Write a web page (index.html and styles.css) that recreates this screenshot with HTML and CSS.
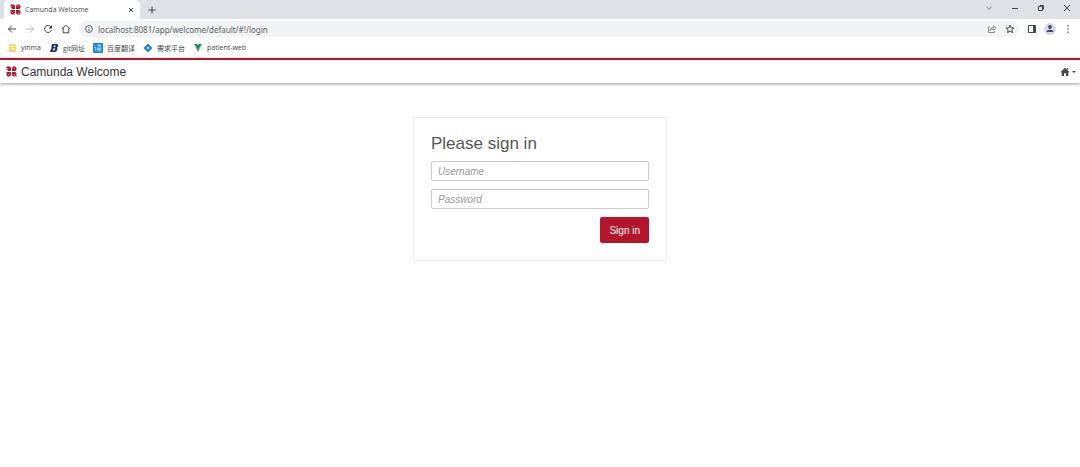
FILE: index.html
```html
<!DOCTYPE html>
<html lang="en">
<head>
    <meta charset="UTF-8">
    <meta name="viewport" content="width=device-width, initial-scale=1.0">
    <title>Camunda Welcome</title>
    <link rel="stylesheet" href="styles.css">
</head>
<body>
    <svg class="defs" width="0" height="0" aria-hidden="true">
        <symbol id="camunda" viewBox="0 0 20 20">
            <path fill="#b5152b" d="M1 1h6l2 2v6H4L1 6zM13 1h4l2 2v4l-2 2h-6V3zM1 11h8v6l-2 2H3l-2-2zM11 11h6l2 2v6h-6l-2-2z"/>
            <path stroke="#fff" stroke-width="1.2" fill="none" d="M1 5h3M14 5l2-2M4 16l2-2M16 15v4"/>
        </symbol>
    </svg>
    <div class="tabs">
        <div class="tab">
            <svg class="logo"><use href="#camunda"/></svg>
            <span class="tab-title">Camunda Welcome</span>
            <button class="icon-btn" aria-label="Close tab"><svg width="6" height="6" viewBox="0 0 6 6"><path d="M1 1l4 4M5 1L1 5"/></svg></button>
        </div>
        <button class="icon-btn new-tab" aria-label="New tab"><svg width="8" height="8" viewBox="0 0 8 8"><path d="M4 .5v7M.5 4h7"/></svg></button>
        <div class="window-buttons">
            <button class="icon-btn soft" aria-label="Search tabs"><svg width="8" height="8" viewBox="0 0 8 8"><path d="M1.500 2.500L4 5.500l2.500-3"/></svg></button>
            <button class="icon-btn" aria-label="Minimize"><svg width="8" height="8" viewBox="0 0 8 8"><path d="M1 4.500h6"/></svg></button>
            <button class="icon-btn" aria-label="Restore"><svg width="8" height="8" viewBox="0 0 8 8"><path d="M1.500 2.500h4v4h-4zM3 2.500V1.500h3.500v3.500h-1"/></svg></button>
            <button class="icon-btn" aria-label="Close"><svg width="8" height="8" viewBox="0 0 8 8"><path d="M1 1l6 6M7 1L1 7"/></svg></button>
        </div>
    </div>
    <div class="toolbar">
        <button class="icon-btn" aria-label="Back"><svg width="10" height="10" viewBox="0 0 10 10"><path d="M9 5H1.500M5 1.500L1.500 5 5 8.500"/></svg></button>
        <button class="icon-btn off" aria-label="Forward"><svg width="10" height="10" viewBox="0 0 10 10"><path d="M1 5h7.500M5 1.500L8.500 5 5 8.500"/></svg></button>
        <button class="icon-btn" aria-label="Reload"><svg width="10" height="10" viewBox="0 0 10 10"><path d="M8 3a3.500 3.500 0 1 0 .5 2.800"/><path class="solid" d="M9 1v3.500H5.500z"/></svg></button>
        <button class="icon-btn" aria-label="Home"><svg width="10" height="10" viewBox="0 0 10 10"><path d="M.8 5.200L5 1.300l4.200 3.900M2.200 4.500v4.300h5.600V4.500"/></svg></button>
        <div class="address">
            <svg class="info" width="8" height="8" viewBox="0 0 8 8"><circle cx="4" cy="4" r="3.400"/><path d="M4 3.600v2.400M4 2v.8"/></svg>
            <input type="text" class="url" aria-label="Address" value="localhost:8081/app/welcome/default/#!/login">
            <button class="icon-btn soft" aria-label="Share"><svg width="10" height="10" viewBox="0 0 10 10"><path d="M3 3H1.500v5.500h6V7M3 6.500c0-2 1.500-3 3.500-3V1.800L9 4.200 6.500 6.300V5C5 5 4 5.300 3 6.500z"/></svg></button>
            <button class="icon-btn" aria-label="Bookmark this page"><svg width="10" height="10" viewBox="0 0 10 10"><path d="M5 1.200l1.100 2.600 2.800.2-2.100 1.900.6 2.700L5 7.200 2.600 8.600l.6-2.700L1.100 4l2.800-.2z"/></svg></button>
        </div>
        <div class="tools">
            <button class="icon-btn" aria-label="Side panel"><svg width="10" height="10" viewBox="0 0 10 10"><path d="M1.500 1.500h7v7h-7z"/><path class="solid" d="M6 1.500h2.500v7H6z"/></svg></button>
            <button class="icon-btn avatar" aria-label="Profile"><svg width="12" height="12" viewBox="0 0 12 12"><circle class="disc" cx="6" cy="6" r="6"/><circle class="person" cx="6" cy="4" r="1.900"/><path class="person" d="M2.500 9c0-3 7-3 7 0z"/></svg></button>
            <button class="icon-btn" aria-label="Menu"><svg width="10" height="10" viewBox="0 0 10 10"><path class="solid" d="M4.500 1h1v1.500h-1zM4.500 4.300h1v1.500h-1zM4.500 7.600h1v1.500h-1z"/></svg></button>
        </div>
    </div>
    <nav class="bookmarks">
        <a href="#yinma"><svg width="10" height="10" viewBox="0 0 10 10"><path fill="#f8d775" d="M2 1h6l1 1v7H2z"/><path fill="#fff2c4" d="M4 3h3v1H4zM4 5h3v1H4z"/></svg>yinma</a>
        <a href="#git"><svg width="10" height="10" viewBox="0 0 10 10"><path fill="#1d2e5c" fill-rule="evenodd" d="M3 1h4.500Q10 1.500 9 3.500L8 4.800Q9 6 8 7.500 7 9 5 9H1l.5-2H2zM5 2.500l-.4 1.700h1.200L7 2.500zM4.200 5.600l-.5 1.900h1.500l1.200-1.900z"/></svg>git网址</a>
        <a href="#fanyi"><svg width="10" height="10" viewBox="0 0 10 10"><rect width="10" height="10" rx="1" fill="#1684e4"/><path stroke="#fff" stroke-width=".6" fill="none" d="M1.500 2l1 1M1.200 4.500h1.500v3l1-1M4 2h4L4.500 4.500M5 2.700l3.500 2M4.200 5.500h4M4 7h4.500M6.300 4.500V9"/></svg>百度翻译</a>
        <a href="#xuqiu"><svg width="10" height="10" viewBox="0 0 10 10"><path fill="#2479e8" fill-rule="evenodd" d="M5 .5L9.500 5 5 9.500.5 5zM5 3.600L3.600 5 5 6.400 6.400 5z"/></svg>需求平台</a>
        <a href="#patient"><svg width="10" height="10" viewBox="0 0 10 10"><path fill="#41a375" d="M1 1h8L5 9z"/><path fill="#2f6858" d="M2.800 1h4.400L5 5.200z"/><path fill="#fff" d="M4.200 1h1.600L5 2.400z"/></svg>patient-web</a>
    </nav>
    <header class="header">
        <a class="brand" href="#/"><svg class="logo"><use href="#camunda"/></svg>Camunda Welcome</a>
        <button class="icon-btn apps" aria-label="Applications">
            <svg width="10" height="10" viewBox="0 0 10 10"><path class="solid" d="M5 .8L9.600 5.300H8.300V9H6V6.200H4V9H1.700V5.300H.4zM7 1h1.200v2L7 2z"/></svg>
            <svg width="4" height="4" viewBox="0 0 4 4"><path class="solid" d="M0 1h4L2 3z"/></svg>
        </button>
    </header>
    <main>
        <form class="signin">
            <h1>Please sign in</h1>
            <input type="text" name="username" placeholder="Username" aria-label="Username">
            <input type="password" name="password" placeholder="Password" aria-label="Password">
            <button class="submit" type="submit">Sign in</button>
        </form>
    </main>
</body>
</html>
```
FILE: styles.css
```css
* {
    box-sizing: border-box;
}
body {
    margin: 0;
    background-color: #fff;
    color: #333;
    font-family: "Liberation Sans", Arial, sans-serif;
}
.defs {
    position: absolute;
}
svg {
    display: block;
    flex: none;
}
a {
    color: inherit;
    text-decoration: none;
}
.logo {
    width: 11px;
    height: 11px;
}
.icon-btn {
    display: flex;
    align-items: center;
    justify-content: center;
    flex: none;
    padding: 0;
    border: 0;
    background: none;
    color: #44474b;
}
.icon-btn path,
.info path,
.info circle {
    fill: none;
    stroke: currentColor;
    stroke-width: 1;
}
.icon-btn .solid {
    fill: currentColor;
    stroke: none;
}

/* browser bars */
.tabs,
.toolbar,
.bookmarks {
    display: flex;
    align-items: center;
    font-family: "Open Sans", "Noto Sans CJK SC", sans-serif;
}
.tabs {
    height: 19px;
    padding: 0 9px 0 4px;
    background-color: #dee1e6;
}
.tab {
    display: flex;
    align-items: center;
    gap: 4px;
    width: 136px;
    height: 19px;
    padding: 0 6px;
    border-radius: 5px 5px 0 0;
    background-color: #fff;
}
.tab-title {
    flex: 1;
    font-size: 7px;
    color: #45494d;
}
.new-tab {
    margin-left: 8px;
}
.window-buttons {
    display: flex;
    gap: 18px;
    margin-left: auto;
    padding-bottom: 3px;
}
.toolbar {
    gap: 8px;
    height: 20px;
    padding: 0 7px;
}
.icon-btn.off {
    color: #b4b6b9;
}
.icon-btn.soft {
    color: #85898d;
}
.address {
    display: flex;
    align-items: center;
    flex: 1;
    gap: 8px;
    height: 16px;
    padding: 0 4px 0 6px;
    border-radius: 8px;
    background-color: #f1f3f4;
}
.info {
    color: #5f6368;
}
.url {
    flex: 1;
    min-width: 0;
    margin-left: -3px;
    padding: 0;
    border: 0;
    background: none;
    font-family: "Noto Sans", sans-serif;
    font-size: 8px;
    color: #5f6368;
}
.tools {
    display: flex;
    align-items: center;
    gap: 7px;
}
.avatar .disc {
    fill: #d5d9e8;
}
.icon-btn.avatar .person {
    fill: #44496b;
    stroke: none;
}
.bookmarks {
    gap: 8px;
    height: 19px;
    padding: 0 7px 2px;
    font-size: 7px;
    color: #45494d;
}
.bookmarks a {
    display: flex;
    align-items: center;
    gap: 4px;
}

/* camunda page */
.header {
    display: flex;
    align-items: center;
    justify-content: space-between;
    height: 25px;
    padding: 0 4px 0 6px;
    border-top: 2px solid #b5152b;
    box-shadow: 0 1px 3px rgba(0, 0, 0, 0.4);
}
.brand {
    display: flex;
    align-items: center;
    gap: 4px;
    font-size: 12px;
}
.apps {
    gap: 2px;
}
.signin {
    display: flex;
    flex-direction: column;
    gap: 8px;
    width: 254px;
    margin: 34px auto 0;
    padding: 17px;
    border: 1px solid #eee;
}
h1 {
    margin: 0;
    font-size: 17px;
    line-height: 18px;
    font-weight: normal;
    color: #555;
}
.signin input {
    height: 20px;
    padding: 0 6px;
    border: 1px solid #ccc;
    border-radius: 2px;
    font-family: inherit;
    font-size: 10px;
    color: #555;
}
.signin input::placeholder {
    font-style: italic;
    color: #999;
}
.submit {
    align-self: flex-end;
    height: 26px;
    padding: 0 9px;
    border: 0;
    border-radius: 2px;
    background-color: #b5152b;
    font-family: inherit;
    font-size: 10px;
    color: #fff;
}
```
